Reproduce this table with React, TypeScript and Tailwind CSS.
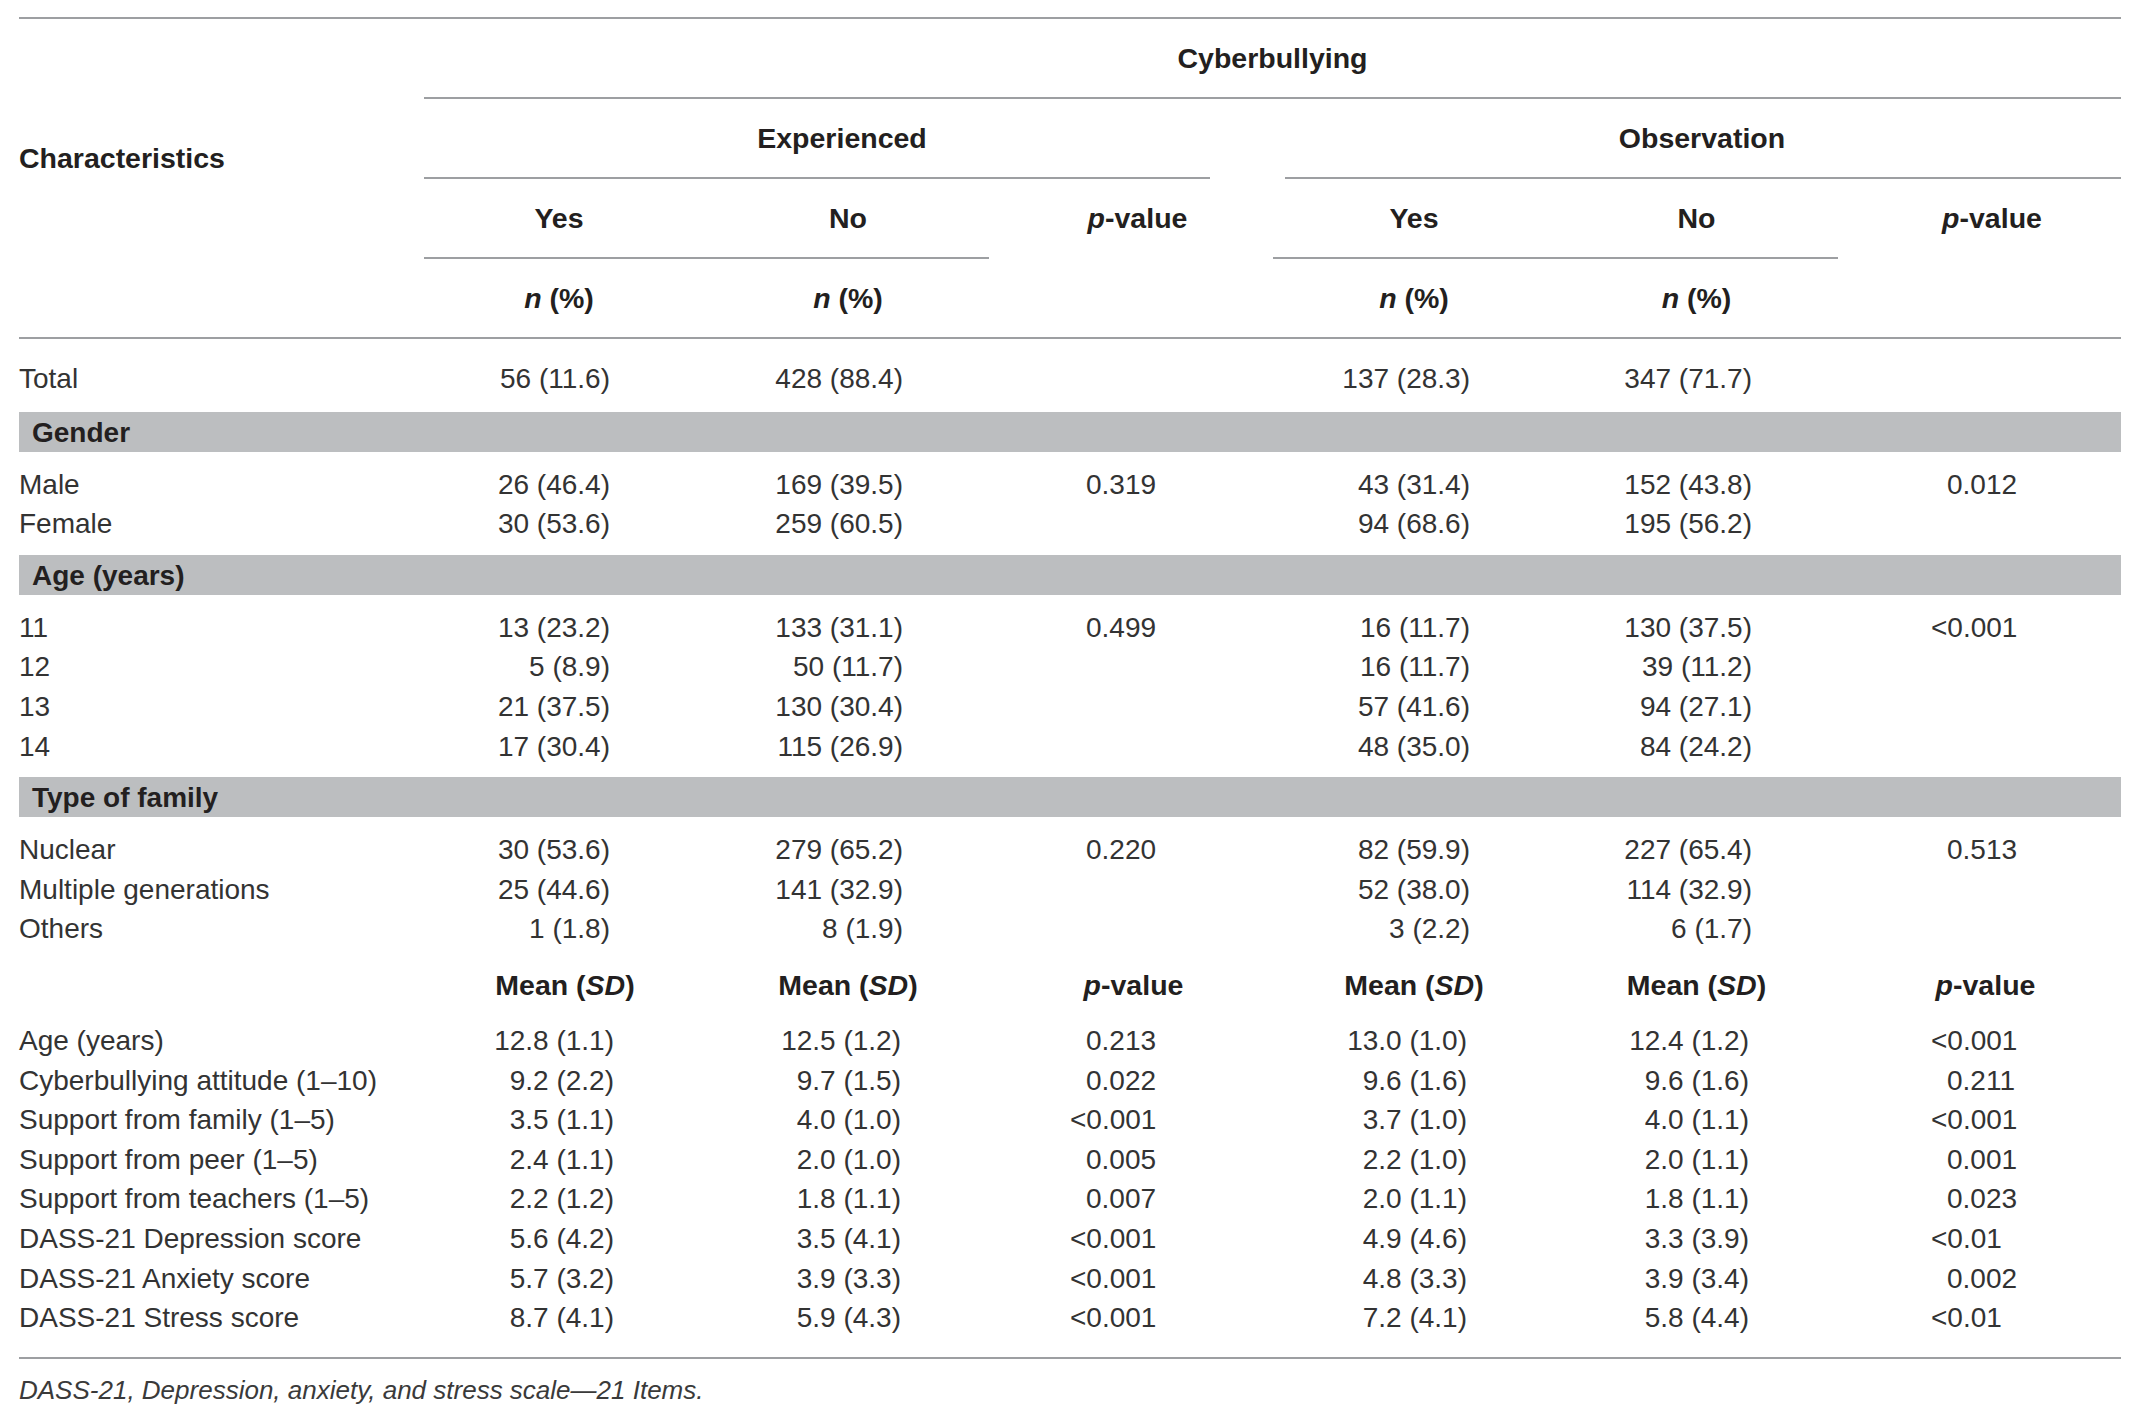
import React from "react";

const grid = "grid grid-cols-[405px_270px_308px_271px_282px_283px_283px]";
const line = "h-[2px] bg-[#9d9fa2]";

const countPad = ["pr-[84px]", "pr-[99px]", "pl-[84px]", "pr-[85px]", "pr-[86px]", "pl-[109px]"];
const meanPad = ["pr-[80px]", "pr-[101px]", "pl-[84px]", "pr-[88px]", "pr-[89px]", "pl-[109px]"];

type Row = [string, string, string, string, string, string, string];

const sections: { title: string; rows: Row[] }[] = [
    {
        title: "Gender",
        rows: [
            ["Male", "26 (46.4)", "169 (39.5)", "0.319", "43 (31.4)", "152 (43.8)", "0.012"],
            ["Female", "30 (53.6)", "259 (60.5)", "", "94 (68.6)", "195 (56.2)", ""],
        ],
    },
    {
        title: "Age (years)",
        rows: [
            ["11", "13 (23.2)", "133 (31.1)", "0.499", "16 (11.7)", "130 (37.5)", "<0.001"],
            ["12", "5 (8.9)", "50 (11.7)", "", "16 (11.7)", "39 (11.2)", ""],
            ["13", "21 (37.5)", "130 (30.4)", "", "57 (41.6)", "94 (27.1)", ""],
            ["14", "17 (30.4)", "115 (26.9)", "", "48 (35.0)", "84 (24.2)", ""],
        ],
    },
    {
        title: "Type of family",
        rows: [
            ["Nuclear", "30 (53.6)", "279 (65.2)", "0.220", "82 (59.9)", "227 (65.4)", "0.513"],
            ["Multiple generations", "25 (44.6)", "141 (32.9)", "", "52 (38.0)", "114 (32.9)", ""],
            ["Others", "1 (1.8)", "8 (1.9)", "", "3 (2.2)", "6 (1.7)", ""],
        ],
    },
];

const means: Row[] = [
    ["Age (years)", "12.8 (1.1)", "12.5 (1.2)", "0.213", "13.0 (1.0)", "12.4 (1.2)", "<0.001"],
    ["Cyberbullying attitude (1–10)", "9.2 (2.2)", "9.7 (1.5)", "0.022", "9.6 (1.6)", "9.6 (1.6)", "0.211"],
    ["Support from family (1–5)", "3.5 (1.1)", "4.0 (1.0)", "<0.001", "3.7 (1.0)", "4.0 (1.1)", "<0.001"],
    ["Support from peer (1–5)", "2.4 (1.1)", "2.0 (1.0)", "0.005", "2.2 (1.0)", "2.0 (1.1)", "0.001"],
    ["Support from teachers (1–5)", "2.2 (1.2)", "1.8 (1.1)", "0.007", "2.0 (1.1)", "1.8 (1.1)", "0.023"],
    ["DASS-21 Depression score", "5.6 (4.2)", "3.5 (4.1)", "<0.001", "4.9 (4.6)", "3.3 (3.9)", "<0.01"],
    ["DASS-21 Anxiety score", "5.7 (3.2)", "3.9 (3.3)", "<0.001", "4.8 (3.3)", "3.9 (3.4)", "0.002"],
    ["DASS-21 Stress score", "8.7 (4.1)", "5.9 (4.3)", "<0.001", "7.2 (4.1)", "5.8 (4.4)", "<0.01"],
];

const PValue = ({ value }: { value: string }) =>
    value.startsWith("<") ? (
        <>
            <span className="-ml-[16px]">&lt;</span>
            {value.slice(1)}
        </>
    ) : (
        <>{value}</>
    );

const DataRow = ({ row, mean }: { row: Row; mean?: boolean }) => {
    const pad = mean ? meanPad : countPad;
    return (
        <div className={`${grid} h-[39.6px] leading-[39.6px]`}>
            <div className="whitespace-nowrap">{row[0]}</div>
            {row.slice(1).map((v, i) => (
                <div key={i} className={`whitespace-nowrap ${i === 2 || i === 5 ? "text-left" : "text-right"} ${pad[i]}`}>
                    {i === 2 || i === 5 ? <PValue value={v} /> : v}
                </div>
            ))}
        </div>
    );
};

const PLabel = () => (
    <>
        <span className="italic">p</span>-value
    </>
);

const App: React.FC = () => {
    return (
        <div className="min-h-[1423px] w-[2144px] bg-white pl-[19px] pt-[17px] font-['Liberation_Sans',Arial,sans-serif] text-[28px] text-[#333333]">
            <div className="w-[2102px]">
                <div className={line}></div>

                {/* header */}
                <div className={`${grid} text-[28.5px] font-bold text-[#231f20]`}>
                    <div className="row-span-4 pt-[119px] leading-[40px]">Characteristics</div>

                    <div className="col-span-6 flex flex-col">
                        <div className="flex h-[78px] items-center justify-center">Cyberbullying</div>
                        <div className={line}></div>
                    </div>

                    <div className="col-span-3 flex flex-col">
                        <div className="flex h-[78px] items-center justify-center pr-[13px]">Experienced</div>
                        <div className={`${line} mr-[63px]`}></div>
                    </div>
                    <div className="col-span-3 flex flex-col">
                        <div className="flex h-[78px] items-center justify-center pl-[10px]">Observation</div>
                        <div className={`${line} ml-[12px]`}></div>
                    </div>

                    <div className="col-span-2 flex flex-col">
                        <div className="flex h-[78px] items-center">
                            <div className="w-[270px] text-center">Yes</div>
                            <div className="w-[308px] text-center">No</div>
                        </div>
                        <div className={`${line} mr-[13px]`}></div>
                    </div>
                    <div className="flex h-[78px] items-center justify-center">
                        <PLabel />
                    </div>
                    <div className="col-span-2 flex flex-col">
                        <div className="flex h-[78px] items-center">
                            <div className="w-[282px] text-center">Yes</div>
                            <div className="w-[283px] text-center">No</div>
                        </div>
                        <div className={line}></div>
                    </div>
                    <div className="flex h-[78px] items-center justify-center pl-[25px]">
                        <PLabel />
                    </div>

                    <div className="flex h-[78px] items-center justify-center">
                        <span className="italic">n</span>&nbsp;(%)
                    </div>
                    <div className="flex h-[78px] items-center justify-center">
                        <span className="italic">n</span>&nbsp;(%)
                    </div>
                    <div></div>
                    <div className="flex h-[78px] items-center justify-center">
                        <span className="italic">n</span>&nbsp;(%)
                    </div>
                    <div className="flex h-[78px] items-center justify-center">
                        <span className="italic">n</span>&nbsp;(%)
                    </div>
                    <div></div>
                </div>
                <div className={line}></div>

                {/* totals */}
                <div className="pt-[20px] pb-[13px]">
                    <DataRow row={["Total", "56 (11.6)", "428 (88.4)", "", "137 (28.3)", "347 (71.7)", ""]} />
                </div>

                {sections.map((s) => (
                    <div key={s.title}>
                        <div className="h-[40px] bg-[#bcbec0] pl-[13px] leading-[41px] font-bold text-[#231f20]">{s.title}</div>
                        <div className="pt-[13px] pb-[11px]">
                            {s.rows.map((r) => (
                                <DataRow key={r[0]} row={r} />
                            ))}
                        </div>
                    </div>
                ))}

                {/* means header */}
                <div className={`${grid} mb-[11px] h-[50px] items-center text-[28.5px] font-bold text-[#231f20]`}>
                    <div></div>
                    <div className="pl-[12px] text-center">
                        Mean (<span className="italic">SD</span>)
                    </div>
                    <div className="text-center">
                        Mean (<span className="italic">SD</span>)
                    </div>
                    <div className="pr-[8px] text-center">
                        <PLabel />
                    </div>
                    <div className="text-center">
                        Mean (<span className="italic">SD</span>)
                    </div>
                    <div className="text-center">
                        Mean (<span className="italic">SD</span>)
                    </div>
                    <div className="pl-[12px] text-center">
                        <PLabel />
                    </div>
                </div>

                <div className="pb-[19px]">
                    {means.map((r) => (
                        <DataRow key={r[0]} row={r} mean />
                    ))}
                </div>
                <div className={line}></div>

                <p className="pt-[11px] text-[26px] leading-[40px] italic text-[#3a3a3a]">
                    DASS-21, Depression, anxiety, and stress scale—21 Items.
                </p>
            </div>
        </div>
    );
};

export default App;
